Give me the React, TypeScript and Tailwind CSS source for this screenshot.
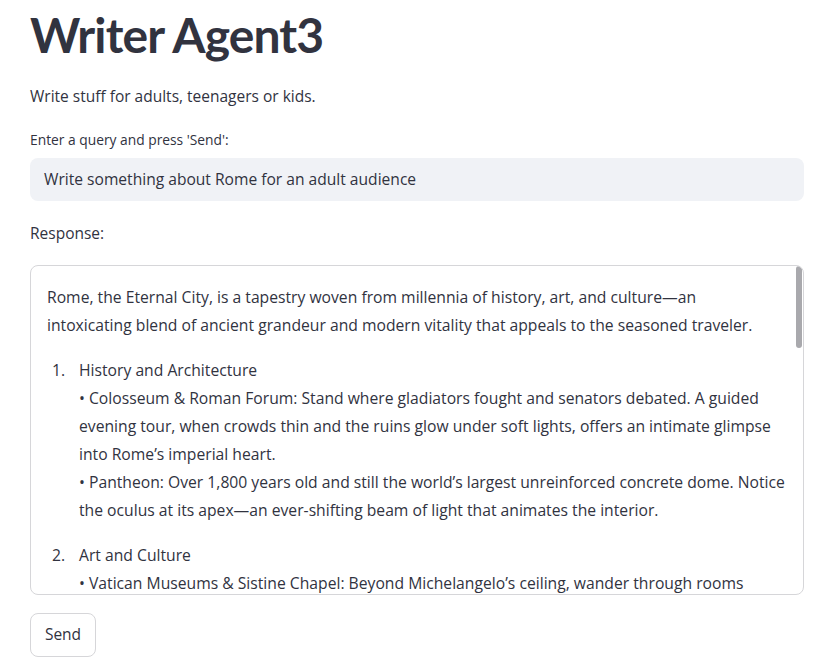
import React from "react";

const sans = { fontFamily: "'Open Sans', 'Noto Sans', sans-serif" };

function Item({ n, title, lines }: { n: string; title: string; lines: string[] }) {
  return (
    <div className="flex mt-[17px]">
      <span className="w-[32px] pl-[5px] shrink-0">{n}</span>
      <div>
        <div>{title}</div>
        {lines.map((l, i) => (
          <div key={i} className="whitespace-nowrap">
            {l}
          </div>
        ))}
      </div>
    </div>
  );
}

export default function App() {
  return (
    <div className="min-h-screen bg-white text-[#31333f]" style={sans}>
      <div className="pl-[30px] w-[804px] flex flex-col">
        <h1
          className="mt-[7px] text-[48px] leading-[56px] font-bold tracking-[-0.9px]"
          style={{ fontFamily: "Lato, sans-serif" }}
        >
          Writer Agent3
        </h1>
        <p className="mt-[21px] text-[15.5px] leading-[24px]">
          Write stuff for adults, teenagers or kids.
        </p>
        <label className="mt-[22px] text-[13.8px] leading-[20px]">
          Enter a query and press 'Send':
        </label>
        <div className="mt-[8px] h-[43px] rounded-lg bg-[#f0f2f6] px-[14px] flex items-center text-[15.6px]">
          Write something about Rome for an adult audience
        </div>
        <p className="mt-[20px] text-[15.5px] leading-[24px]">Response:</p>

        {/* response box */}
        <div className="relative mt-[20px] h-[330px] border border-[#d6d6d9] rounded-lg overflow-hidden">
          <div className="pl-[16px] pt-[17px] text-[15.7px] leading-[28px]">
            <div className="whitespace-nowrap">
              Rome, the Eternal City, is a tapestry woven from millennia of history, art, and culture—an
            </div>
            <div className="whitespace-nowrap">
              intoxicating blend of ancient grandeur and modern vitality that appeals to the seasoned traveler.
            </div>
            <Item
              n="1."
              title="History and Architecture"
              lines={[
                "• Colosseum & Roman Forum: Stand where gladiators fought and senators debated. A guided",
                "evening tour, when crowds thin and the ruins glow under soft lights, offers an intimate glimpse",
                "into Rome’s imperial heart.",
                "• Pantheon: Over 1,800 years old and still the world’s largest unreinforced concrete dome. Notice",
                "the oculus at its apex—an ever-shifting beam of light that animates the interior.",
              ]}
            />
            <Item
              n="2."
              title="Art and Culture"
              lines={[
                "• Vatican Museums & Sistine Chapel: Beyond Michelangelo’s ceiling, wander through rooms",
              ]}
            />
          </div>
          <div className="absolute right-[1px] top-0 w-[6px] h-[82px] rounded-full bg-[#a9a9ad]" />
        </div>

        <button className="mt-[18px] w-[66px] h-[44px] border border-[#d6d6d9] rounded-lg text-[15.5px] bg-white">
          Send
        </button>
      </div>
    </div>
  );
}
